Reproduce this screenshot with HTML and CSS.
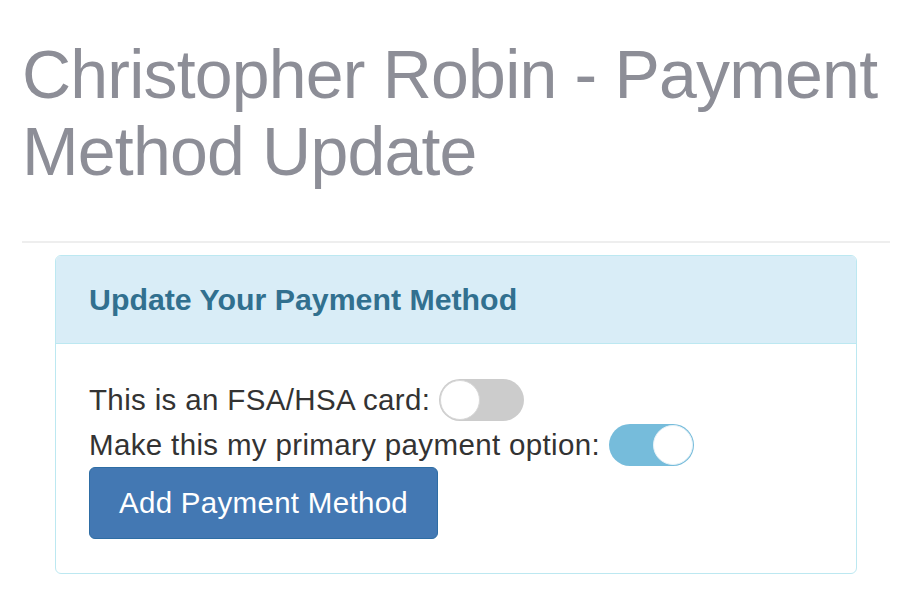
FILE: index.html
```html
<!DOCTYPE html>
<html>
<head>
<meta charset="utf-8">
<link rel="stylesheet" href="styles.css">
</head>
<body>
<div class="page">
  <h1 class="title">Christopher Robin - Payment Method Update</h1>
  <hr class="rule">
  <div class="panel">
    <div class="panel-heading">Update Your Payment Method</div>
    <div class="panel-body">
      <div class="row">This is an FSA/HSA card: <span class="toggle"><span class="knob"></span></span></div>
      <div class="row">Make this my primary payment option: <span class="toggle on"><span class="knob"></span></span></div>
      <button class="btn">Add Payment Method</button>
    </div>
  </div>
</div>
</body>
</html>
```

FILE: styles.css
```css
html, body { margin: 0; padding: 0; background: #fff; }
body { font-family: "Liberation Sans", Arial, sans-serif; color: #333; }
.page { padding: 0 33px 0 22px; }
.title {
  font-family: "Liberation Sans", Arial, sans-serif;
  font-weight: normal;
  font-size: 68px;
  letter-spacing: -0.8px;
  line-height: 77px;
  color: #8d8e97;
  margin: 36px 0 0 0;
}
.rule { border: 0; border-top: 2px solid #eeeeee; margin: 51px 0 12px 0; }
.panel {
  margin-left: 33px;
  width: 802px;
  border: 1px solid #bce8f1;
  border-radius: 6px;
  box-sizing: border-box;
}
.panel-heading {
  background: #d9edf7;
  color: #31708f;
  font-weight: bold;
  font-size: 30.3px;
  height: 88px;
  box-sizing: border-box;
  padding: 27px 33px 0 33px;
  border-bottom: 1px solid #bce8f1;
  border-radius: 5px 5px 0 0;
}
.panel-body { padding: 33px 33px 34px 33px; font-size: 29.5px; letter-spacing: 0.35px; }
.row { display: flex; align-items: center; height: 45px; white-space: pre; }
.toggle {
  display: inline-block;
  width: 85px; height: 42px;
  border-radius: 21px;
  background: #cccccc;
  position: relative;
  box-sizing: border-box;
}
.toggle .knob {
  position: absolute; top: 1px; left: 1px;
  width: 40px; height: 40px; border-radius: 50%;
  background: #fff;
  box-sizing: border-box;
  border: 1px solid #d8d8d8;
}
.toggle.on { background: #76bcdb; }
.toggle.on .knob { left: auto; right: 1px; border-color: #e6f2f8; }
.btn {
  display: block;
  background: #4378b3;
  border: 1px solid #2e6da4;
  border-radius: 6px;
  color: #fff;
  font-family: "Liberation Sans", Arial, sans-serif;
  font-size: 29.5px;
  letter-spacing: 0.3px;
  width: 349px; height: 72px;
  padding: 0;
}
```
